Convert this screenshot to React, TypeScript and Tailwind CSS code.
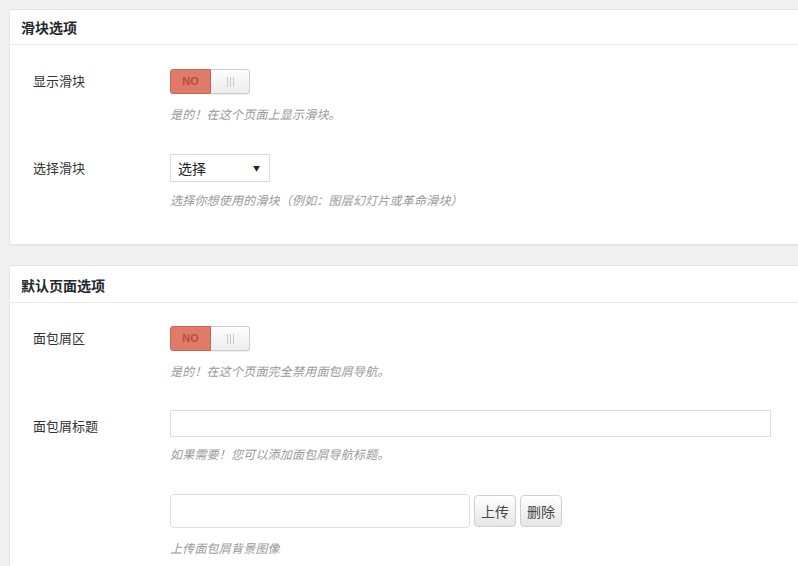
import React from "react";

const font = { fontFamily: '"Noto Sans CJK SC", "Liberation Sans", sans-serif' };

function Toggle() {
  return (
    <div className="flex h-[25px] w-[80px]">
      <div className="flex w-[41px] items-center justify-center rounded-l-[3px] border border-[#c96656] bg-[#e07a69] text-[11px] font-bold text-[#b34f40]" style={{ fontFamily: '"Liberation Sans", Arial, sans-serif' }}>
        NO
      </div>
      <div className="flex flex-1 items-center justify-center rounded-r-[3px] border border-l-0 border-[#cfcfcf] bg-gradient-to-b from-[#fdfdfd] to-[#ececec] shadow-[0_1px_1px_rgba(0,0,0,0.08)]">
        <div className="flex gap-[2px]">
          <span className="h-[10px] w-px bg-[#c8c8c8]" />
          <span className="h-[10px] w-px bg-[#c8c8c8]" />
          <span className="h-[10px] w-px bg-[#c8c8c8]" />
        </div>
      </div>
    </div>
  );
}

function Desc({ children, mt }: { children: React.ReactNode; mt: string }) {
  return <p className={`${mt} text-[12px] italic leading-[18px] tracking-[0.2px] text-[#999]`}>{children}</p>;
}

export default function App() {
  return (
    <div className="min-h-[566px] w-[798px] overflow-hidden bg-[#f1f1f1] pl-[9px] pt-[9px]" style={font}>
      {/* Card 1 */}
      <div className="w-[820px] border border-[#e5e5e5] bg-white shadow-[0_1px_1px_rgba(0,0,0,0.04)]">
        <div className="flex h-[35px] items-center border-b border-[#e8e8e8] pl-[11px] text-[14px] font-bold text-[#23282d]">
          滑块选项
        </div>
        <div className="pl-[23px] pt-[24px] pb-[35px]">
          <div className="flex">
            <div className="w-[137px] text-[13px] leading-[23px] text-[#333]">显示滑块</div>
            <div>
              <Toggle />
              <Desc mt="mt-[11px]">是的！在这个页面上显示滑块。</Desc>
            </div>
          </div>
          <div className="mt-[31px] flex">
            <div className="w-[137px] text-[13px] leading-[28px] text-[#333]">选择滑块</div>
            <div>
              <div className="flex h-[28px] w-[100px] items-center justify-between border border-[#dcdcdc] bg-white pl-[7px] pr-[9px] text-[14px] text-[#222]">
                <span>选择</span>
                <span className="text-[7px] text-[#222]">▼</span>
              </div>
              <Desc mt="mt-[9px]">选择你想使用的滑块（例如：图层幻灯片或革命滑块）</Desc>
            </div>
          </div>
        </div>
      </div>

      {/* Card 2 */}
      <div className="mt-[20px] w-[820px] border border-[#e5e5e5] bg-white shadow-[0_1px_1px_rgba(0,0,0,0.04)]">
        <div className="flex h-[37px] items-center border-b border-[#e8e8e8] pl-[11px] pt-[2px] text-[14px] font-bold text-[#23282d]">
          默认页面选项
        </div>
        <div className="pl-[23px] pt-[23px] pb-[30px]">
          <div className="flex">
            <div className="w-[137px] text-[13px] leading-[23px] text-[#333]">面包屑区</div>
            <div>
              <Toggle />
              <Desc mt="mt-[11px]">是的！在这个页面完全禁用面包屑导航。</Desc>
            </div>
          </div>
          <div className="mt-[30px] flex">
            <div className="w-[137px] pt-[2px] text-[13px] leading-[27px] text-[#333]">面包屑标题</div>
            <div>
              <input className="block h-[27px] w-[601px] border border-[#dddddd] bg-white outline-none" />
              <Desc mt="mt-[8px]">如果需要！您可以添加面包屑导航标题。</Desc>
            </div>
          </div>
          <div className="mt-[31px] flex">
            <div className="w-[137px]" />
            <div>
              <div className="flex items-center gap-[4px]">
                <input className="block h-[34px] w-[300px] rounded-[4px] border border-[#dddddd] bg-white outline-none" />
                <button className="h-[32px] w-[42px] rounded-[4px] border border-[#cfcfcf] bg-gradient-to-b from-[#ffffff] to-[#e6e6e6] text-[14px] text-[#444]">上传</button>
                <button className="h-[32px] w-[42px] rounded-[4px] border border-[#cfcfcf] bg-gradient-to-b from-[#ffffff] to-[#e6e6e6] text-[14px] text-[#444]">删除</button>
              </div>
              <Desc mt="mt-[11px]">上传面包屑背景图像</Desc>
            </div>
          </div>
        </div>
      </div>
    </div>
  );
}
